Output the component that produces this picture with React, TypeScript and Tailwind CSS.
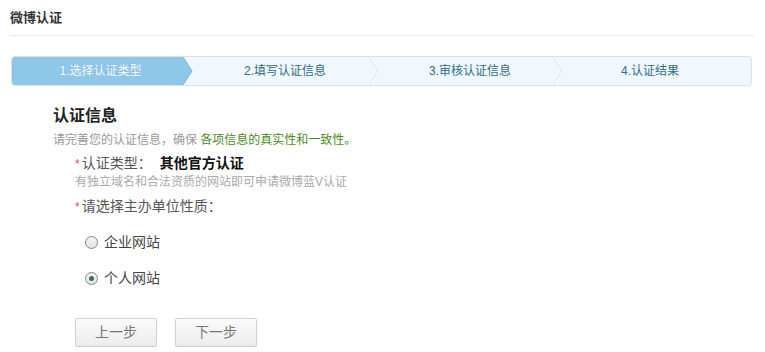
import React from "react";

const font = { fontFamily: '"Liberation Sans", "Noto Sans CJK SC", sans-serif' };

function Chevron() {
  return (
    <svg width="10" height="28" viewBox="0 0 10 28" className="shrink-0">
      <polyline points="0,0 9,14 0,28" fill="none" stroke="#cddfe9" strokeWidth="1" />
      <polyline points="1,0 10,14 1,28" fill="none" stroke="#ffffff" strokeWidth="1" />
    </svg>
  );
}

function StepBar() {
  return (
    <div className="flex h-[30px] border border-[#d4e4ee] rounded-[3px] bg-[#f1f8fc] overflow-hidden text-[12px]">
      <div className="w-[181px] flex shrink-0">
        <div className="flex-1 bg-[#8fc7e8] rounded-l-[3px] flex items-center justify-center pl-[6px] text-white [text-shadow:0_0_1px_#6aa6c9]">
          1.选择认证类型
        </div>
        <svg width="10" height="28" viewBox="0 0 10 28" className="shrink-0">
          <polygon points="0,0 9,14 0,28" fill="#8fc7e8" />
          <polyline points="0,0 9,14 0,28" fill="none" stroke="#7ab4d8" strokeWidth="1" />
        </svg>
      </div>
      <div className="w-[186px] flex shrink-0">
        <div className="flex-1 flex items-center justify-center pl-[8px] text-[#2f6e86]">2.填写认证信息</div>
        <Chevron />
      </div>
      <div className="w-[184px] flex shrink-0">
        <div className="flex-1 flex items-center justify-center pl-[8px] text-[#2f6e86]">3.审核认证信息</div>
        <Chevron />
      </div>
      <div className="flex-1 flex items-center justify-center pr-[14px] text-[#2f6e86]">4.认证结果</div>
    </div>
  );
}

function Radio({ checked, label }: { checked?: boolean; label: string }) {
  return (
    <label className="flex items-center gap-[6px] text-[14px] text-[#444]">
      <span className="w-[13px] h-[13px] rounded-full border border-[#7b8a84] bg-gradient-to-b from-[#f4f4f4] to-[#e2e6e4] flex items-center justify-center">
        {checked && <span className="w-[5px] h-[5px] rounded-full bg-[#3f6e4f]" />}
      </span>
      {label}
    </label>
  );
}

export default function App() {
  return (
    <div className="w-[765px] h-[352px] bg-white px-[10px]" style={font}>
      <div className="pt-[9px] pb-[8px] border-b border-[#e8e8e8] text-[13px] leading-[18px] font-bold text-[#333]">
        微博认证
      </div>
      <div className="mt-[20px] pl-px pr-[3px]">
        <StepBar />
      </div>

      <div className="pl-[43px] pt-[20px]">
        <div className="text-[16px] leading-[20px] font-bold text-[#222]">认证信息</div>
        <div className="mt-[6px] text-[12px] leading-[16px] text-[#999]">
          请完善您的认证信息，确保 <span className="text-[#4d8a1e]">各项信息的真实性和一致性。</span>
        </div>

        <div className="pl-[22px] mt-[5px]">
          <div className="flex items-baseline text-[14px] leading-[20px]">
            <span className="text-[#e05050] text-[12px] mr-[2px]">*</span>
            <span className="text-[#555]">认证类型：</span>
            <span className="ml-[8px] font-bold text-[#111]">其他官方认证</span>
          </div>
          <div className="text-[12px] leading-[16px] text-[#aaa]">
            有独立域名和合法资质的网站即可申请微博蓝V认证
          </div>
          <div className="flex items-baseline text-[14px] leading-[20px] mt-[6px]">
            <span className="text-[#e05050] text-[12px] mr-[2px]">*</span>
            <span className="text-[#555]">请选择主办单位性质：</span>
          </div>

          <div className="pl-[10px] mt-[15px] flex flex-col gap-[15px]">
            <Radio label="企业网站" />
            <Radio checked label="个人网站" />
          </div>

          <div className="flex gap-[18px] mt-[29px]">
            <button className="w-[82px] h-[29px] border border-[#cfcfcf] rounded-[2px] bg-gradient-to-b from-[#fbfbfb] to-[#ececec] text-[14px] text-[#777]">
              上一步
            </button>
            <button className="w-[82px] h-[29px] border border-[#cfcfcf] rounded-[2px] bg-gradient-to-b from-[#fbfbfb] to-[#ececec] text-[14px] text-[#777]">
              下一步
            </button>
          </div>
        </div>
      </div>
    </div>
  );
}
